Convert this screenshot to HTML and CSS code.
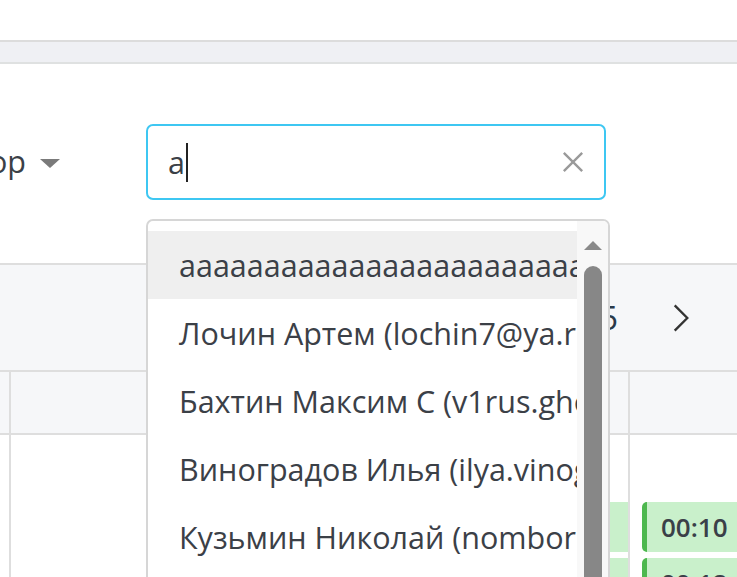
FILE: index.html
```html
<!DOCTYPE html>
<html lang="ru">
<head>
<meta charset="utf-8">
<link rel="stylesheet" href="styles.css">
</head>
<body>
<div class="page">
  <div class="topbar"></div>
  <div class="band"></div>
  <div class="toolbar">
    <div class="filter">
      <div class="filter-label"><span>Автор</span></div>
      <span class="caret-down"></span>
    </div>
    <div class="search">
      <span class="search-text">a</span><span class="cursor"></span>
      <svg class="clear" width="24" height="24" viewBox="0 0 24 24"><path d="M2 2 L22 22 M22 2 L2 22" stroke="#9a9a9a" stroke-width="2.6" fill="none"/></svg>
    </div>
  </div>
  <div class="panel">
    <div class="pager">
      <span class="page-num">5</span>
      <svg class="next" width="20" height="32" viewBox="0 0 20 32"><path d="M3 2 L17 16 L3 30" stroke="#333" stroke-width="2.6" fill="none"/></svg>
    </div>
  </div>
  <div class="grid head">
    <div class="cell"></div>
    <div class="cell line"></div>
    <div class="cell line"></div>
  </div>
  <div class="grid body-row first">
    <div class="cell"></div>
    <div class="cell line"></div>
    <div class="cell line"></div>
  </div>
  <div class="grid body-row green-row">
    <div class="cell"></div>
    <div class="cell line"><div class="green-fill"></div></div>
    <div class="cell line"><div class="badge">00:10</div></div>
  </div>
  <div class="grid body-row green-row">
    <div class="cell"></div>
    <div class="cell line"><div class="green-fill"></div></div>
    <div class="cell line"><div class="badge">00:12</div></div>
  </div>

  <div class="dropdown">
    <ul class="options">
      <li class="option active">aaaaaaaaaaaaaaaaaaaaaaaaaaaaaaaaa</li>
      <li class="option">Лочин Артем (lochin7@ya.ru)</li>
      <li class="option">Бахтин Максим С (v1rus.ghost@gmail.com)</li>
      <li class="option">Виноградов Илья (ilya.vinogradov@mail.ru)</li>
      <li class="option">Кузьмин Николай (nomboro@yandex.ru)</li>
      <li class="option">Петров Сергей (petrov@mail.ru)</li>
    </ul>
    <div class="scrollbar">
      <span class="scroll-up"></span>
      <span class="thumb"></span>
    </div>
  </div>
</div>
</body>
</html>
```
FILE: styles.css
```css
* { box-sizing: border-box; }
html, body { margin: 0; padding: 0; }
body {
  font-family: "Open Sans", "Noto Sans", sans-serif;
  color: #3b4047;
  background: #fff;
  width: 737px;
  height: 577px;
  overflow: hidden;
}
.page { position: relative; width: 737px; height: 577px; overflow: hidden; }
.topbar { height: 40px; background: #fff; }
.band {
  height: 24px;
  background: #eff0f4;
  border-top: 2px solid #dcdcdc;
  border-bottom: 2px solid #dfe1e1;
}
.toolbar {
  height: 199px;
  display: flex;
  align-items: flex-start;
  padding-top: 60px;
}
.filter {
  display: flex;
  align-items: center;
  height: 76px;
}
.filter-label {
  width: 26px;
  overflow: hidden;
  display: flex;
  justify-content: flex-end;
  white-space: nowrap;
  font-size: 30.5px;
  line-height: 40px;
  color: #3b4047;
  margin-top: -3px;
}
.caret-down {
  width: 0; height: 0;
  margin-left: 14px;
  border-left: 10px solid transparent;
  border-right: 10px solid transparent;
  border-top: 9px solid #7a7a7a;
  margin-top: 2px;
}
.search {
  margin-left: 86px;
  width: 460px;
  height: 76px;
  border: 2px solid #3ec7f2;
  border-radius: 7px;
  display: flex;
  align-items: center;
  padding-left: 20px;
  padding-right: 20px;
  font-size: 30.5px;
  color: #3b4047;
}
.search-text { line-height: 40px; }
.cursor {
  width: 2px;
  height: 39px;
  background: #222;
  margin-left: 1px;
}
.clear { margin-left: auto; width: 22px; height: 22px; }
.panel {
  height: 107px;
  border-top: 2px solid #dedede;
  background: #f6f7f9;
  display: flex;
  justify-content: flex-end;
  align-items: center;
}
.pager {
  display: flex;
  align-items: center;
  padding-right: 47px;
}
.page-num {
  font-size: 32px;
  color: #2b3a4a;
  margin-right: 54px;
}
.next { width: 18px; height: 30px; }
.grid {
  display: grid;
  grid-template-columns: 9px 619px 1fr;
}
.cell.line { border-left: 2px solid #dedede; }
.head {
  height: 65px;
  background: #f6f7f9;
  border-top: 2px solid #dedede;
  border-bottom: 2px solid #dedede;
}
.body-row.first { height: 67px; }
.green-row { height: 56px; }
.green-fill {
  height: 50px;
  background: #c9f0cb;
  margin-left: 300px;
}
.badge {
  margin-left: 12px;
  height: 50px;
  background: #c9f0cb;
  border-left: 5px solid #4db84f;
  border-radius: 5px 0 0 5px;
  font-size: 26px;
  font-weight: 600;
  color: #3a4048;
  display: flex;
  align-items: center;
  padding-left: 14px;
}
.dropdown {
  position: absolute;
  left: 146px;
  top: 219px;
  width: 464px;
  height: 400px;
  border: 2px solid #d6d6d6;
  border-radius: 7px 7px 0 0;
  background: #fff;
  display: flex;
  overflow: hidden;
}
.options {
  list-style: none;
  margin: 0;
  padding: 10px 0 0 0;
  width: 429px;
  flex: none;
}
.option {
  height: 68px;
  display: flex;
  align-items: center;
  padding-left: 31px;
  white-space: nowrap;
  overflow: hidden;
  font-size: 30.5px;
  color: #3b4047;
}
.option.active { background: #efefef; }
.scrollbar {
  flex: 1;
  background: #f8f8f8;
  display: flex;
  flex-direction: column;
  align-items: center;
  padding-top: 20px;
}
.scroll-up {
  width: 0; height: 0;
  border-left: 9px solid transparent;
  border-right: 9px solid transparent;
  border-bottom: 9px solid #8a8a8a;
}
.thumb {
  margin-top: 16px;
  width: 18px;
  height: 400px;
  background: #878787;
  border-radius: 9px 9px 0 0;
}
```
